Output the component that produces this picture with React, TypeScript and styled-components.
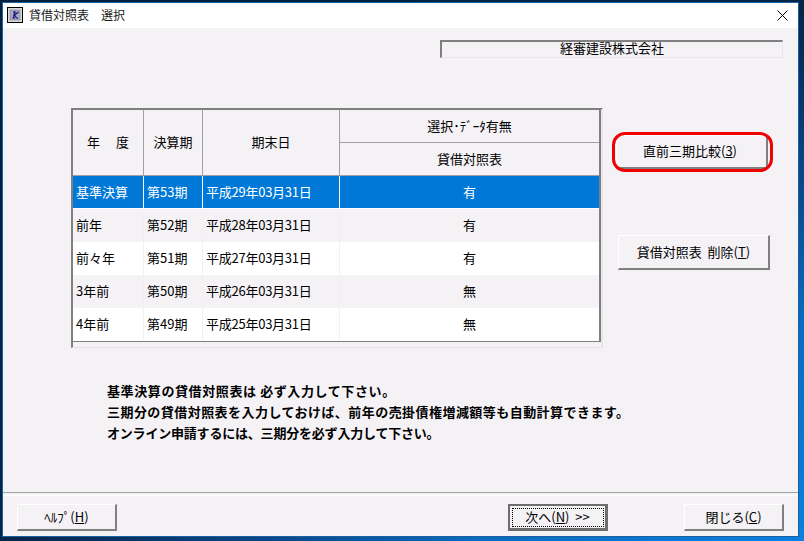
import React from "react"
import styled, { createGlobalStyle } from "styled-components"

const GlobalStyle = createGlobalStyle`
  html, body {
    margin: 0;
    padding: 0;
    width: 804px;
    height: 541px;
    overflow: hidden;
  }
`

const Desktop = styled.div`
  box-sizing: border-box;
  width: 804px;
  height: 541px;
  padding: 2px 5px 4px 2px;
  background: linear-gradient(to bottom right, #03203f 0%, #042448 50%, #0a4a90 68%, #0a6cc0 80%, #0a80e0 100%);
  font-family: "Noto Sans CJK JP", sans-serif;
  font-size: 13px;
  color: #000;
`

const Window = styled.div`
  box-sizing: border-box;
  height: 100%;
  display: flex;
  flex-direction: column;
  border: 1px solid #1a5f9e;
  background: #f5f2f6;
`

const TitleBar = styled.div`
  box-sizing: border-box;
  height: 25px;
  flex: none;
  display: flex;
  align-items: center;
  padding: 0 10px 1px 4px;
  background: #fff;
  font-size: 12px;
  color: #1a1a1a;
`

const AppIcon = styled.svg`
  width: 16px;
  height: 16px;
  flex: none;
  margin-right: 6px;
`

const TitleText = styled.span`
  flex: 1;
  white-space: pre;
  padding-bottom: 1px;
`

const CloseIcon = styled.svg`
  width: 11px;
  height: 11px;
  flex: none;
`

const Body = styled.div`
  flex: 1;
  display: flex;
  flex-direction: column;
  min-height: 0;
`

const CompanyRow = styled.div`
  display: flex;
  justify-content: flex-end;
  padding: 12px 15px 0 0;
`

const CompanyBox = styled.div`
  box-sizing: border-box;
  width: 343px;
  height: 18px;
  border-style: solid;
  border-width: 2px 1px 1px 2px;
  border-color: #808080 #e8e6ea #e8e6ea #808080;
  text-align: center;
  font-size: 13px;
  line-height: 12px;
`

const Middle = styled.div`
  display: flex;
  align-items: flex-start;
  padding: 50px 0 0 68px;
`

const TableFrame = styled.div`
  box-sizing: border-box;
  width: 532px;
  height: 240px;
  border-style: solid;
  border-width: 2px 2px 1px 2px;
  border-color: #808080 #e8e6ea #e4e2e6 #808080;
`

const TableInner = styled.div`
  box-sizing: border-box;
  width: 528px;
  height: 232px;
  border-right: 2px solid #808080;
  border-bottom: 2px solid #808080;
`

const Grid = styled.div`
  display: grid;
  grid-template-columns: 71px 59px 137px 259px;
  grid-template-rows: repeat(7, 33px);
`

const HeaderCell = styled.div<{ $tall?: boolean; $last?: boolean }>`
  box-sizing: border-box;
  display: flex;
  align-items: center;
  justify-content: center;
  padding-bottom: 2px;
  grid-row: ${p => (p.$tall ? "span 2" : "auto")};
  border-right: ${p => (p.$last ? "none" : "1px solid #a0a0a0")};
  border-bottom: 1px solid #a0a0a0;
  white-space: pre;
`

const Cell = styled.div<{ $selected: boolean; $odd: boolean; $center?: boolean; $last?: boolean; $tight?: boolean }>`
  box-sizing: border-box;
  display: flex;
  align-items: center;
  justify-content: ${p => (p.$center ? "center" : "flex-start")};
  padding: 0 0 2px ${p => (p.$center ? "0" : "3px")};
  background: ${p => (p.$selected ? "#0078d7" : p.$odd ? "#fff" : "#f5f2f6")};
  color: ${p => (p.$selected ? "#fff" : "#000")};
  border-right: ${p =>
    p.$last ? "none" : p.$selected ? "1px solid #fff" : "1px solid #f1eff3"};
  border-bottom: 1px solid ${p => (p.$selected ? "#fff" : "transparent")};
  letter-spacing: ${p => (p.$tight ? "-0.25px" : "0")};
  white-space: pre;
`

const SideColumn = styled.div`
  display: flex;
  flex-direction: column;
  align-items: flex-start;
  margin-left: 9px;
`

const Highlight = styled.div`
  position: relative;
  box-sizing: border-box;
  width: 161px;
  height: 40px;
  margin-top: 24px;
  padding: 3px 0 0 4px;

  /* red annotation drawn over the button */
  &::after {
    content: "";
    position: absolute;
    inset: 0;
    border: 3px solid #f00000;
    border-radius: 13px;
    pointer-events: none;
  }
`

const RaisedButton = styled.button<{ $focused?: boolean }>`
  box-sizing: border-box;
  width: 100px;
  height: 27px;
  padding: 0 0 2px;
  display: flex;
  align-items: center;
  justify-content: center;
  flex: none;
  font: inherit;
  color: #000;
  background: #f5f2f6;
  border-style: solid;
  border-width: ${p => (p.$focused ? "2px 3px 3px 2px" : "1px 2px 2px 1px")};
  border-color: ${p =>
    p.$focused ? "#6e6e6e" : "#fff #808080 #808080 #fff"};
  white-space: pre;
`

const CompareButton = styled(RaisedButton)`
  width: 152px;
  height: 34px;
  padding-right: 3px;
`

const DeleteButton = styled(RaisedButton)`
  width: 152px;
  height: 35px;
  margin: 63px 0 0 6px;
`

const NextButton = styled(RaisedButton)`
  margin-left: 391px;
  padding: 0;
`

const CloseButton = styled(RaisedButton)`
  margin-left: 76px;
`

const FocusRing = styled.span`
  box-sizing: border-box;
  width: 92px;
  height: 19px;
  padding-bottom: 2px;
  display: flex;
  align-items: center;
  justify-content: center;
  border: 1px dotted #000;
`

const Notes = styled.div`
  padding: 33px 0 0 104px;
  font-size: 13px;
  font-weight: 700;
`

const NoteLine = styled.div<{ $spacing: number }>`
  height: 21px;
  line-height: 20px;
  white-space: pre;
  letter-spacing: ${p => p.$spacing}px;
`

const Spacer = styled.div`
  flex: 1;
`

const Divider = styled.div`
  box-sizing: border-box;
  height: 4px;
  flex: none;
  border-top: 1px solid #a0a0a0;
  border-bottom: 1px solid #fff;
`

const Footer = styled.div`
  flex: none;
  display: flex;
  padding: 8px 14px 5px 14px;
`

const rows = [
  { label: "基準決算", term: "第53期", date: "平成29年03月31日", has: "有" },
  { label: "前年", term: "第52期", date: "平成28年03月31日", has: "有" },
  { label: "前々年", term: "第51期", date: "平成27年03月31日", has: "有" },
  { label: "3年前", term: "第50期", date: "平成26年03月31日", has: "無" },
  { label: "4年前", term: "第49期", date: "平成25年03月31日", has: "無" },
]

export default function App() {
  return (
    <>
      <GlobalStyle />
      <Desktop>
        <Window>
          <TitleBar>
            <AppIcon viewBox="0 0 16 16">
              <rect x="0.5" y="0.5" width="15" height="15" fill="#d8d8d8" stroke="#000" />
              <rect x="3" y="3" width="10" height="10" fill="#a8a8c4" stroke="#707070" strokeWidth="0.5" />
              <path d="M6 5h3M7.5 5L6.5 11M5.5 11h2.5M11.5 5L7.5 8L9.5 11h1.5" stroke="#0c0c78" strokeWidth="1.1" fill="none" />
            </AppIcon>
            <TitleText>貸借対照表　選択</TitleText>
            <CloseIcon viewBox="0 0 11 11">
              <path d="M0.5 0.5l10 10M10.5 0.5l-10 10" stroke="#000" strokeWidth="1" fill="none" />
            </CloseIcon>
          </TitleBar>
          <Body>
            <CompanyRow>
              <CompanyBox>経審建設株式会社</CompanyBox>
            </CompanyRow>
            <Middle>
              <TableFrame>
                <TableInner>
                  <Grid>
                    <HeaderCell $tall>年　 度</HeaderCell>
                    <HeaderCell $tall>決算期</HeaderCell>
                    <HeaderCell $tall>期末日</HeaderCell>
                    <HeaderCell $last>選択･ﾃﾞｰﾀ有無</HeaderCell>
                    <HeaderCell $last>貸借対照表</HeaderCell>
                    {rows.map((r, i) => {
                      const base = { $selected: i === 0, $odd: i % 2 === 0 }
                      return (
                        <React.Fragment key={r.label}>
                          <Cell {...base}>{r.label}</Cell>
                          <Cell {...base}>{r.term}</Cell>
                          <Cell {...base} $tight>{r.date}</Cell>
                          <Cell {...base} $center $last>{r.has}</Cell>
                        </React.Fragment>
                      )
                    })}
                  </Grid>
                </TableInner>
              </TableFrame>
              <SideColumn>
                <Highlight>
                  <CompareButton>直前三期比較(<u>3</u>)</CompareButton>
                </Highlight>
                <DeleteButton>貸借対照表  削除(<u>T</u>)</DeleteButton>
              </SideColumn>
            </Middle>
            <Notes>
              <NoteLine $spacing={0.6}>基準決算の貸借対照表は 必ず入力して下さい。</NoteLine>
              <NoteLine $spacing={0.45}>三期分の貸借対照表を入力しておけば、前年の売掛債権増減額等も自動計算できます。</NoteLine>
              <NoteLine $spacing={-0.2}>オンライン申請するには、三期分を必ず入力して下さい。</NoteLine>
            </Notes>
            <Spacer />
            <Divider />
            <Footer>
              <RaisedButton>ﾍﾙﾌﾟ(<u>H</u>)</RaisedButton>
              <NextButton $focused>
                <FocusRing>次へ(<u>N</u>)  &gt;&gt;</FocusRing>
              </NextButton>
              <CloseButton>閉じる(<u>C</u>)</CloseButton>
            </Footer>
          </Body>
        </Window>
      </Desktop>
    </>
  )
}
